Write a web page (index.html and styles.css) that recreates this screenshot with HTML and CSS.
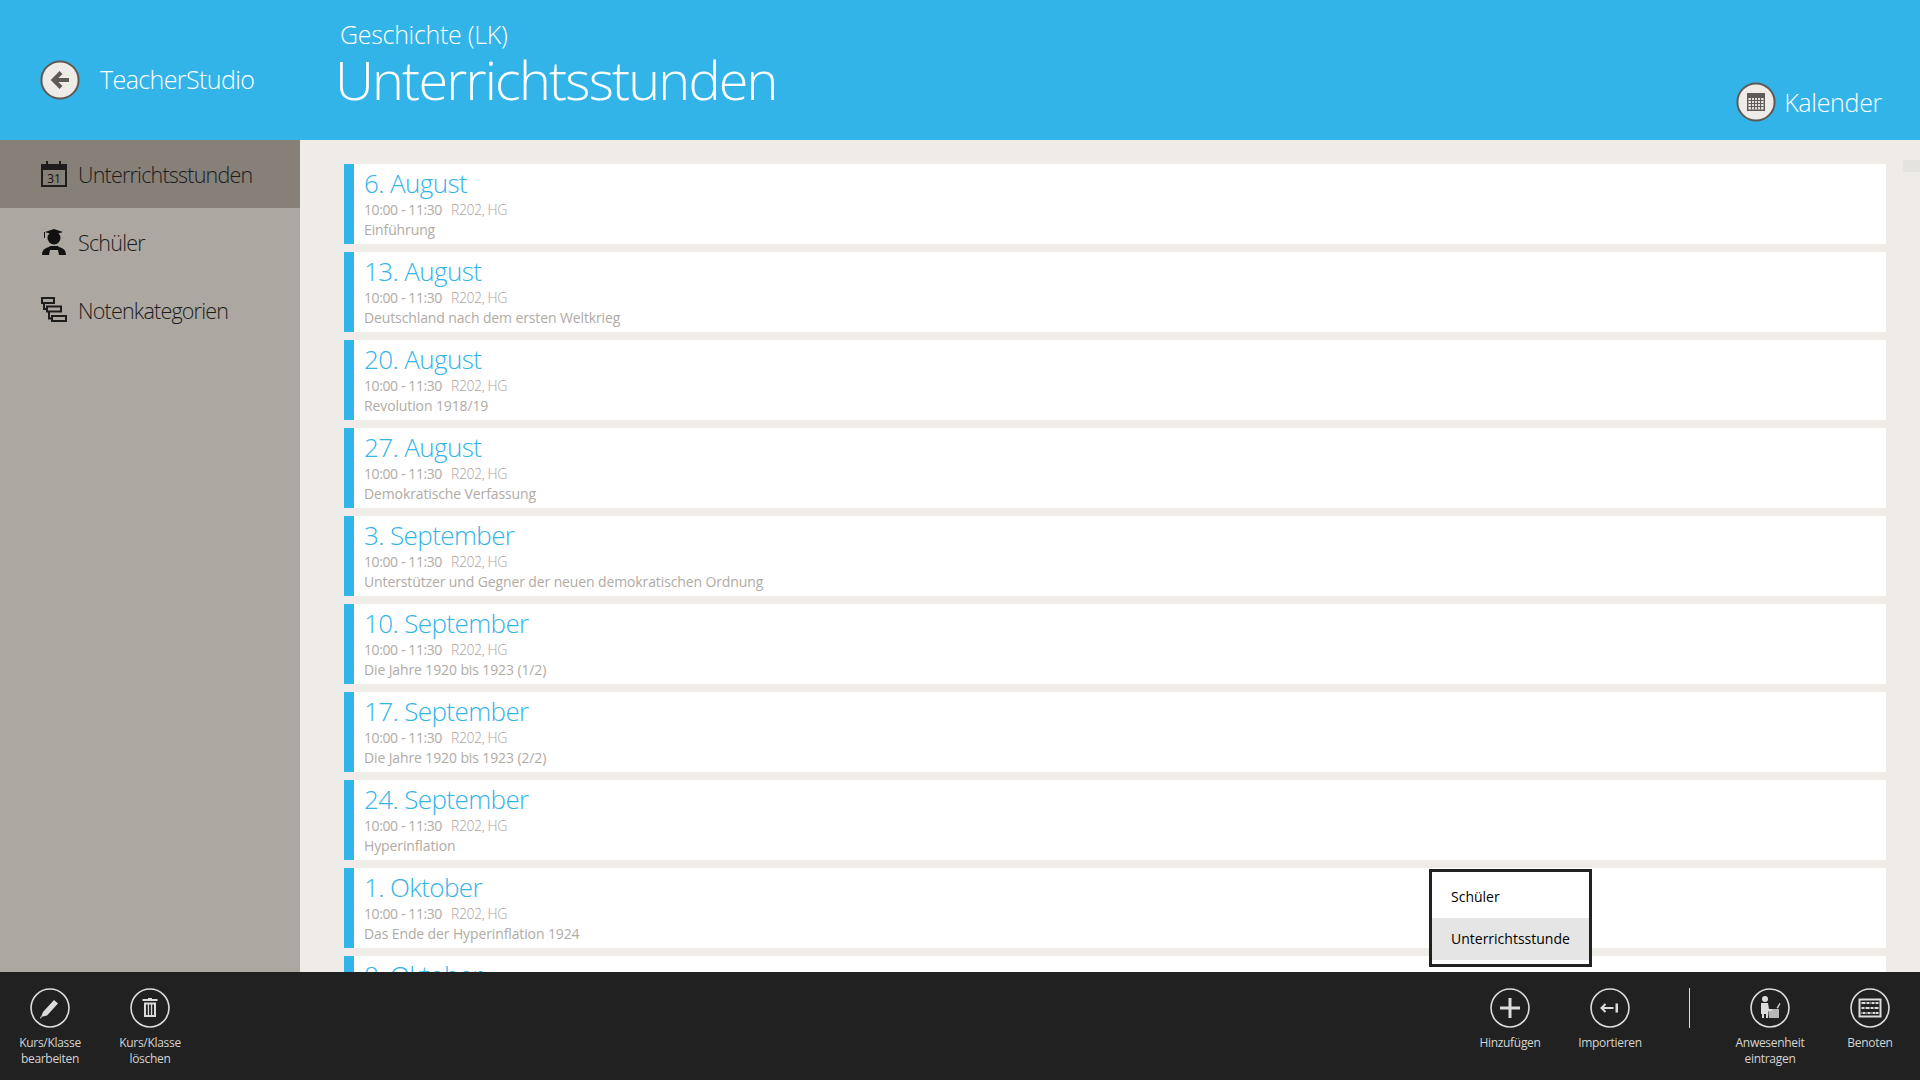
FILE: index.html
```html
<!DOCTYPE html>
<html lang="de">
<head>
<meta charset="utf-8">
<title>TeacherStudio</title>
<link rel="stylesheet" href="styles.css">
</head>
<body>
<header class="top">
  <div class="brand">
    <svg class="round-btn" viewBox="0 0 40 40"><circle cx="20" cy="20" r="18.6" fill="#efece8" stroke="#5f5a55" stroke-width="2"/><path d="M29 20H14M21 12.500l-7.500 7.500 7.500 7.500" fill="none" stroke="#5f5a55" stroke-width="4"/></svg>
    <span class="brand-name">TeacherStudio</span>
  </div>
  <div class="titles">
    <div class="subtitle">Geschichte (LK)</div>
    <h1 class="title">Unterrichtsstunden</h1>
  </div>
  <div class="cal-link">
    <svg class="round-btn" viewBox="0 0 40 40"><circle cx="20" cy="20" r="18.6" fill="#efece8" stroke="#5f5a55" stroke-width="2"/><rect x="11" y="11" width="18" height="18" fill="#5f5a55"/><path d="M12.500 16h15v11.500h-15z" fill="#efece8"/><path d="M12.500 18.500h15M12.500 21.500h15M12.500 24.500h15M15.500 16v11.500M18.500 16v11.500M21.500 16v11.500M24.500 16v11.500" stroke="#5f5a55" stroke-width="1.200"/></svg>
    <span>Kalender</span>
  </div>
</header>

<div class="middle">
  <nav class="side">
    <div class="side-item active">
      <svg class="side-icon" viewBox="0 0 26 26"><path d="M0 3h5V0h2v3h11V0h2v3h6v23H0z" fill="#1d1d1d"/><rect x="2" y="9" width="22" height="15" fill="#868079"/><text x="13" y="21.500" class="cal-num">31</text></svg>
      <span>Unterrichtsstunden</span>
    </div>
    <div class="side-item">
      <svg class="side-icon" viewBox="0 0 26 26"><path d="M13 0l9 3-9 3-9-3z" fill="#111"/><path d="M3 3h1v6H3z" fill="#111"/><circle cx="13" cy="9" r="6.500" fill="#111"/><path d="M1 26c0-5 3-7 7-8l1-1h8l1 1c4 1 7 3 7 8H18l-1-5H9l-1 5z" fill="#111"/></svg>
      <span>Schüler</span>
    </div>
    <div class="side-item">
      <svg class="side-icon" viewBox="0 0 26 26"><g fill="none" stroke="#1d1d1d" stroke-width="2"><rect x="1" y="1" width="12" height="5"/><rect x="6" y="9.500" width="14" height="5"/><rect x="11" y="19" width="14" height="5"/><path d="M3 6v6h3M8 14.500v7h3"/></g></svg>
      <span>Notenkategorien</span>
    </div>
  </nav>

  <main class="content">
    <section class="card"><h2>6. August</h2><p class="meta"><span>10:00 - 11:30</span><span class="room">R202, HG</span></p><p class="desc">Einführung</p></section>
    <section class="card"><h2>13. August</h2><p class="meta"><span>10:00 - 11:30</span><span class="room">R202, HG</span></p><p class="desc">Deutschland nach dem ersten Weltkrieg</p></section>
    <section class="card"><h2>20. August</h2><p class="meta"><span>10:00 - 11:30</span><span class="room">R202, HG</span></p><p class="desc">Revolution 1918/19</p></section>
    <section class="card"><h2>27. August</h2><p class="meta"><span>10:00 - 11:30</span><span class="room">R202, HG</span></p><p class="desc">Demokratische Verfassung</p></section>
    <section class="card"><h2>3. September</h2><p class="meta"><span>10:00 - 11:30</span><span class="room">R202, HG</span></p><p class="desc">Unterstützer und Gegner der neuen demokratischen Ordnung</p></section>
    <section class="card"><h2>10. September</h2><p class="meta"><span>10:00 - 11:30</span><span class="room">R202, HG</span></p><p class="desc">Die Jahre 1920 bis 1923 (1/2)</p></section>
    <section class="card"><h2>17. September</h2><p class="meta"><span>10:00 - 11:30</span><span class="room">R202, HG</span></p><p class="desc">Die Jahre 1920 bis 1923 (2/2)</p></section>
    <section class="card"><h2>24. September</h2><p class="meta"><span>10:00 - 11:30</span><span class="room">R202, HG</span></p><p class="desc">Hyperinflation</p></section>
    <section class="card"><h2>1. Oktober</h2><p class="meta"><span>10:00 - 11:30</span><span class="room">R202, HG</span></p><p class="desc">Das Ende der Hyperinflation 1924</p></section>
    <section class="card"><h2>8. Oktober</h2></section>
    <div class="scroll-thumb"></div>
  </main>
</div>

<footer class="bar">
  <div class="bar-group">
    <div class="action">
      <svg class="action-icon" viewBox="0 0 40 40"><circle cx="20" cy="20" r="19" class="ring"/><path d="M11 29l2-5 11-12 4 3.500-11 12z M10 30.500l2-.5-1.500-1.500z" class="solid"/></svg>
      <span>Kurs/Klasse bearbeiten</span>
    </div>
    <div class="action">
      <svg class="action-icon" viewBox="0 0 40 40"><circle cx="20" cy="20" r="19" class="ring"/><path d="M18 10h4v1h5.500v2h-15v-2H18zM14 14.500h12V29H14zM16 16.500v10.500h1.800V16.500zM19.100 16.500v10.500h1.800V16.500zM22.200 16.500v10.500H24V16.500z" class="solid" fill-rule="evenodd"/></svg>
      <span>Kurs/Klasse löschen</span>
    </div>
  </div>
  <div class="bar-group">
    <div class="action">
      <svg class="action-icon" viewBox="0 0 40 40"><circle cx="20" cy="20" r="19" class="ring"/><path d="M18.500 10h3v8.500H30v3h-8.500V30h-3v-8.500H10v-3h8.500z" class="solid"/></svg>
      <span>Hinzufügen</span>
    </div>
    <div class="action">
      <svg class="action-icon" viewBox="0 0 40 40"><circle cx="20" cy="20" r="19" class="ring"/><path d="M23.500 20H11.500M15.500 16l-4 4 4 4" fill="none" stroke="#dcdcdc" stroke-width="2"/><rect x="25.500" y="15.500" width="2.500" height="9" class="solid"/></svg>
      <span>Importieren</span>
    </div>
    <div class="divider"></div>
    <div class="action">
      <svg class="action-icon" viewBox="0 0 40 40"><circle cx="20" cy="20" r="19" class="ring"/><circle cx="15" cy="11" r="3" class="solid"/><path d="M11 15h7l1 6h3v2h-4v7h-2v-4h-2v4h-2v-4h-1z" class="solid"/><path d="M18 21h11v9H19z" class="solid" opacity="0.8"/><path d="M26.500 20l3-5 1 .5-2.500 5z" class="solid"/></svg>
      <span>Anwesenheit eintragen</span>
    </div>
    <div class="action">
      <svg class="action-icon" viewBox="0 0 40 40"><circle cx="20" cy="20" r="19" class="ring"/><rect x="9.500" y="11.500" width="21" height="17" fill="none" stroke="#dcdcdc" stroke-width="2"/><path d="M11 15h18M11 20h18M11 25h18" stroke="#dcdcdc" stroke-width="1"/><path d="M12 14h3v2h-3zM17 14h2v2h-2zM22 14h2v2h-2zM26 14h2v2h-2zM12 19h2v2h-2zM16 19h3v2h-3zM21 19h2v2h-2zM25 19h3v2h-3zM13 24h2v2h-2zM18 24h2v2h-2zM23 24h2v2h-2zM26 24h2v2h-2z" class="solid"/></svg>
      <span>Benoten</span>
    </div>
  </div>
  <div class="flyout">
    <div class="fly-item">Schüler</div>
    <div class="fly-item hot">Unterrichtsstunde</div>
  </div>
</footer>
</body>
</html>
```

FILE: styles.css
```css
* { box-sizing: border-box; }
html, body { height: 100%; }
body {
  margin: 0;
  height: 1080px;
  overflow: hidden;
  display: grid;
  grid-template-rows: 140px 832px 108px;
  font-family: "Open Sans", "Noto Sans", sans-serif;
  background: #efece8;
}
.top {
  background: #33b4e8;
  color: #fff;
  display: flex;
  font-weight: 300;
}
.brand {
  width: 337px;
  padding: 60px 0 0 40px;
  display: flex;
  align-items: flex-start;
  gap: 20px;
  font-size: 25px;
  letter-spacing: -0.6px;
}
.brand-name { line-height: 38px; }
.round-btn { width: 40px; height: 40px; flex: none; }
.titles { flex: 1; }
.subtitle {
  font-size: 25px;
  line-height: 34px;
  margin: 17px 0 0 3px;
  letter-spacing: -0.3px;
}
.title {
  margin: 0 0 0 -2px;
  font-size: 54px;
  font-weight: 300;
  line-height: 57px;
  letter-spacing: -1.8px;
}
.cal-link {
  display: flex;
  align-items: center;
  gap: 8px;
  height: 40px;
  margin-top: 82px;
  padding-right: 38px;
  font-size: 25px;
  letter-spacing: -0.3px;
}
.middle { display: flex; min-height: 0; }
.side { width: 300px; background: #aca7a0; color: #1c1c1c; flex: none; }
.side-item {
  height: 68px;
  display: flex;
  align-items: center;
  gap: 11px;
  padding-left: 41px;
  font-size: 21.5px;
  font-weight: 300;
  letter-spacing: -0.8px;
}
.side-item.active { background: #868079; }
.side-icon { width: 26px; height: 26px; flex: none; }
.cal-num { font-size: 12px; text-anchor: middle; fill: #111; font-weight: 400; letter-spacing: 0; }
.content {
  flex: 1;
  position: relative;
  overflow: hidden;
  padding: 24px 34px 0 44px;
  display: flex;
  flex-direction: column;
  gap: 8px;
}
.card {
  height: 80px;
  flex: none;
  background: #fff;
  border-left: 10px solid #33b4e8;
  padding-left: 9px;
}
.card h2 {
  margin: 0;
  padding: 2px 0 0 1px;
  font-size: 26px;
  font-weight: 300;
  line-height: 35px;
  color: #33b4e8;
  letter-spacing: -0.6px;
}
.card p {
  margin: 0 0 0 1px;
  font-size: 14px;
  line-height: 20px;
  color: #b0aba5;
  letter-spacing: -0.12px;
}
.card .meta { display: flex; gap: 9px; margin-top: -1px; letter-spacing: -0.4px; }
.room { font-weight: 300; color: #a8a39c; }
.scroll-thumb {
  position: absolute;
  top: 20px;
  right: 0;
  width: 17px;
  height: 12px;
  background: #e5e3df;
}
.bar {
  background: #212121;
  color: #d4d4d4;
  display: flex;
  justify-content: space-between;
  position: relative;
  padding-top: 16px;
}
.bar-group { display: flex; align-items: flex-start; }
.action {
  width: 100px;
  display: flex;
  flex-direction: column;
  align-items: center;
  text-align: center;
  font-size: 12px;
  line-height: 16px;
  gap: 7px;
  letter-spacing: -0.3px;
}
.action span { padding: 0 10px; }
.action-icon { width: 40px; height: 40px; flex: none; }
.ring { fill: none; stroke: #dcdcdc; stroke-width: 1.600; }
.solid { fill: #dcdcdc; }
.divider { width: 1px; height: 40px; background: #dcdcdc; margin: 0 30px 0 29px; }
.flyout {
  position: absolute;
  left: 1429px;
  bottom: 113px;
  width: 163px;
  height: 98px;
  background: #fff;
  border: 3px solid #212121;
  padding-top: 4px;
  color: #000;
  font-size: 14px;
  font-weight: 500;
}
.fly-item { height: 42px; line-height: 42px; padding-left: 19px; }
.fly-item.hot { background: #e5e5e5; }
```
